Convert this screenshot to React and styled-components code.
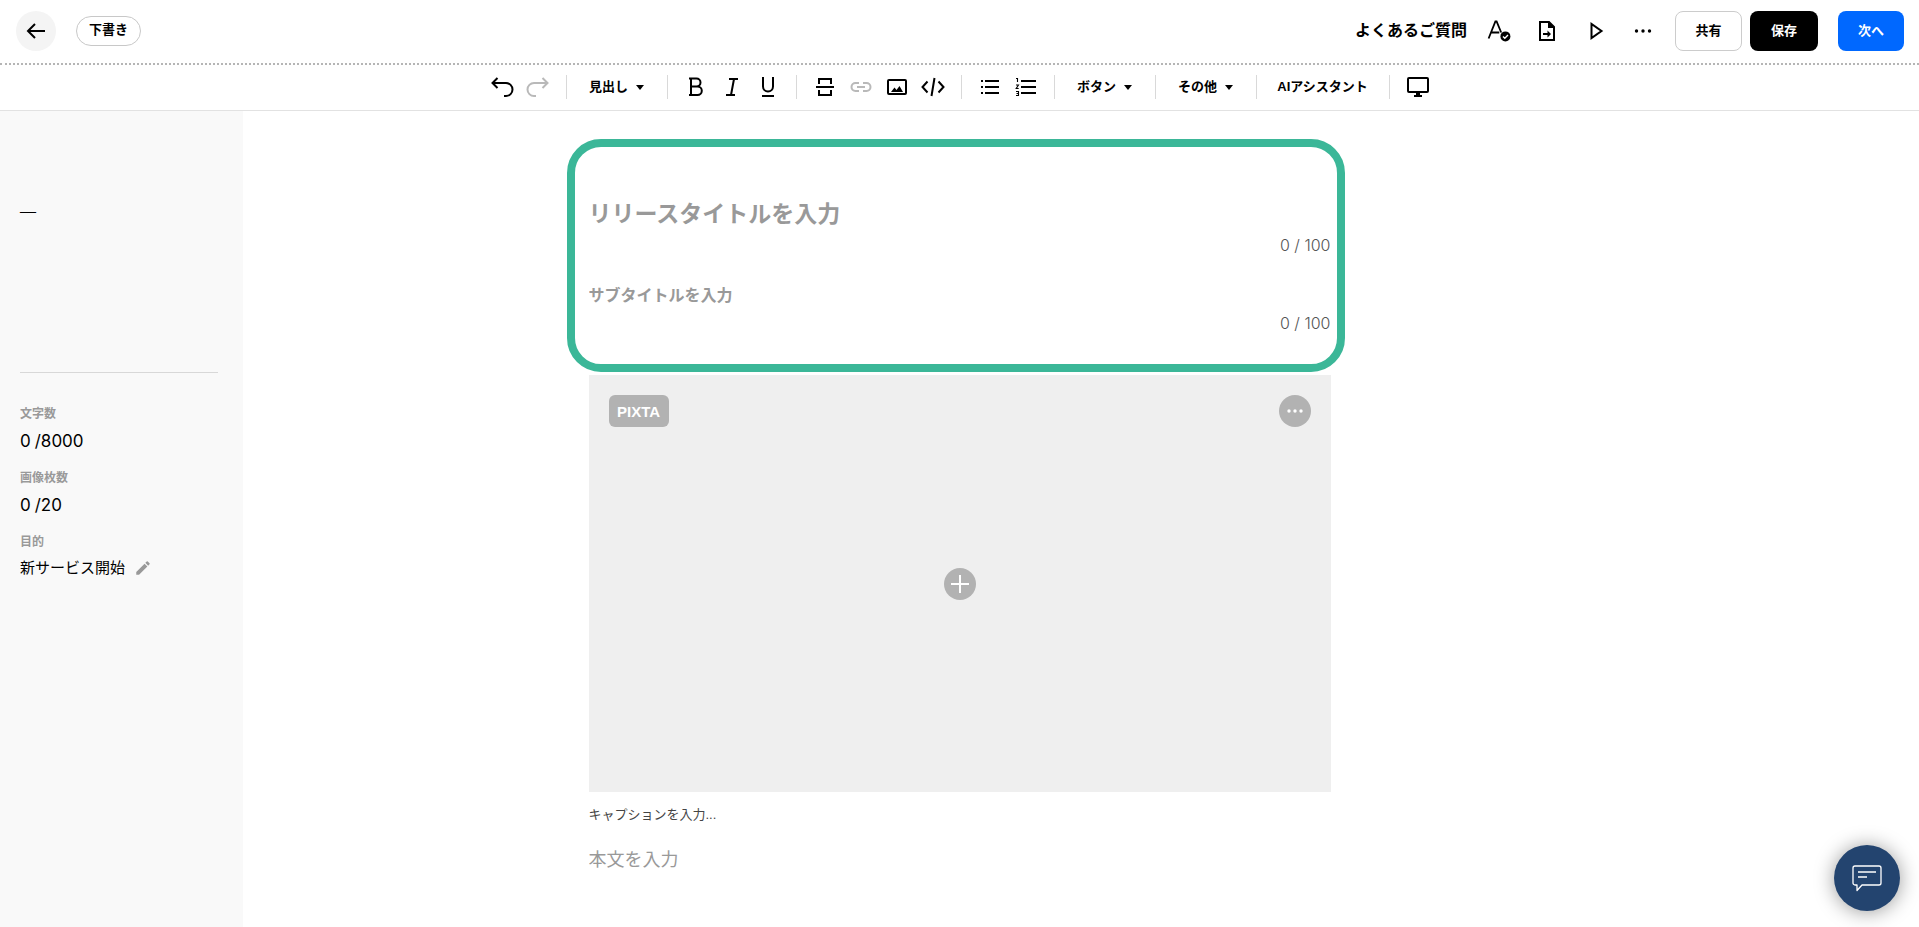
import { useState } from 'react';
import styled, { createGlobalStyle, css } from 'styled-components';

const GlobalStyle = createGlobalStyle`
  *,
  *::before,
  *::after {
    box-sizing: border-box;
  }

  body {
    margin: 0;
    color: #000;
    background: #fff;
    font-family: 'Liberation Sans', 'Noto Sans CJK JP', sans-serif;
  }

  button,
  input,
  textarea {
    font-family: inherit;
    color: inherit;
  }

  button {
    padding: 0;
    border: none;
    background: none;
    cursor: pointer;
  }
`;

const Page = styled.div`
  display: flex;
  flex-direction: column;
  min-height: 100vh;
`;

const Header = styled.header`
  display: flex;
  align-items: center;
  justify-content: space-between;
  padding: 11px 15px 12px 16px;
  border-bottom: 2px dotted #b5b5b5;
`;

const HeaderGroup = styled.div`
  display: flex;
  align-items: center;
  gap: 20px;
`;

const IconGroup = styled.div`
  display: flex;
  align-items: center;
  gap: 24px;
`;

const ButtonGroup = styled.div`
  display: flex;
  gap: 8px;
`;

const BackButton = styled.button`
  display: flex;
  align-items: center;
  justify-content: center;
  width: 40px;
  height: 40px;
  border-radius: 50%;
  background: #f4f4f4;
`;

const Status = styled.span`
  padding: 0 12px 2px;
  border: 1px solid #c8c8c8;
  border-radius: 15px;
  font-size: 13px;
  font-weight: 700;
  line-height: 26px;
`;

const FaqLink = styled.a`
  color: #000;
  font-size: 16px;
  font-weight: 700;
  line-height: 24px;
  text-decoration: none;
`;

const variants = {
  outline: css`
    min-width: 67px;
    border: 1px solid #ccc;
    background: #fff;
    color: #000;
  `,
  dark: css`
    min-width: 68px;
    background: #000;
    color: #fff;
  `,
  primary: css`
    min-width: 66px;
    background: #0068ff;
    color: #fff;
  `,
};

const Button = styled.button`
  height: 40px;
  padding-bottom: 4px;
  border-radius: 8px;
  font-size: 13px;
  font-weight: 700;
  ${({ $variant }) => variants[$variant]}
`;

const Toolbar = styled.div`
  display: flex;
  justify-content: center;
  padding: 10px 0 11px;
  border-bottom: 1px solid #e2e2e2;
`;

const Tools = styled.div`
  display: flex;
  gap: 12px;
  padding: 0 16px;

  &:first-child {
    padding-left: 0;
  }

  &:last-child {
    padding-right: 0;
  }
`;

const Divider = styled.span`
  width: 1px;
  height: 24px;
  background: #d9d9d9;
`;

const IconButton = styled.button`
  display: flex;
  width: 24px;
  height: 24px;

  &:disabled {
    color: #b9b9b9;
    cursor: default;
  }
`;

const MenuButton = styled.button`
  display: flex;
  align-items: center;
  justify-content: center;
  gap: 8px;
  width: ${({ $wide }) => ($wide ? '132px' : '100px')};
  height: 24px;
  font-size: 13px;
  font-weight: 700;
  line-height: 24px;
`;

const Body = styled.div`
  display: grid;
  flex: 1;
  grid-template-columns: 243px minmax(0, 1fr) 243px;
`;

const Sidebar = styled.aside`
  padding: 88px 25px 24px 20px;
  background: #f9f9f9;
`;

const Summary = styled.div`
  height: 174px;
  border-bottom: 1px solid #d8d8d8;
  font-family: 'Liberation Serif', serif;
  font-size: 16px;
  line-height: 24px;
`;

const Stats = styled.dl`
  display: flex;
  flex-direction: column;
  gap: 14px;
  margin: 32px 0 0;
`;

const StatLabel = styled.dt`
  margin-bottom: 4px;
  color: #999;
  font-size: 12px;
  font-weight: 700;
  line-height: 18px;
`;

const StatValue = styled.dd`
  display: flex;
  align-items: center;
  gap: 4px;
  margin: 0;
  font-family: Inter, 'Noto Sans CJK JP', sans-serif;
  font-size: 17px;
  line-height: 28px;
`;

const Purpose = styled(StatValue)`
  gap: 9px;
  font-size: 15px;
  line-height: 26px;
`;

const EditButton = styled.button`
  display: flex;
  color: #999;
`;

const Editor = styled.main`
  width: 100%;
  max-width: 742px;
  margin: 0 auto;
  padding: 28px 0 40px;
`;

const Highlight = styled.section`
  margin: 0 -14px 2px -22px;
  padding: 49px 6px 29px 14px;
  border: 8px solid #3bb798;
  border-radius: 34px;
`;

const Field = styled.input`
  display: block;
  width: 100%;
  padding: 0;
  border: none;
  outline: none;
  background: none;

  &::placeholder {
    color: #999;
    opacity: 1;
  }
`;

const TitleField = styled(Field)`
  height: 36px;
  font-size: 23px;
  font-weight: 700;
`;

const SubtitleField = styled(Field)`
  height: 28px;
  margin-top: 25px;
  font-size: 16px;
  font-weight: 700;
`;

const Counter = styled.p`
  margin: 1px 0 0;
  color: #555;
  font-family: Inter, sans-serif;
  font-size: 16px;
  font-weight: 300;
  line-height: 24px;
  text-align: right;
`;

const ImageArea = styled.div`
  display: flex;
  flex-direction: column;
  aspect-ratio: 16 / 9;
  margin-top: 3px;
  padding: 20px;
  background: #efefef;
`;

const ImageActions = styled.div`
  display: flex;
  justify-content: space-between;
`;

const StockButton = styled.button`
  width: 60px;
  height: 32px;
  border-radius: 6px;
  background: #b2b2b2;
  color: #fff;
  font-size: 15px;
  font-weight: 700;
`;

const RoundButton = styled.button`
  display: flex;
  align-items: center;
  justify-content: center;
  width: 32px;
  height: 32px;
  border-radius: 50%;
  background: #b2b2b2;
  color: #fff;
`;

const ImageDrop = styled.div`
  display: flex;
  flex: 1;
  align-items: center;
  justify-content: center;
  padding-bottom: 32px;
`;

const CaptionField = styled(Field)`
  height: 20px;
  margin-top: 12px;
  font-size: 13px;

  &::placeholder {
    color: #444;
  }
`;

const TextField = styled(Field)`
  height: 32px;
  margin-top: 20px;
  font-size: 18px;
  line-height: 32px;
  resize: none;
`;

const ChatButton = styled.button`
  position: fixed;
  right: 19px;
  bottom: 16px;
  display: flex;
  align-items: center;
  justify-content: center;
  width: 66px;
  height: 66px;
  border-radius: 50%;
  background: #23446f;
  color: #fff;
  box-shadow: 0 1px 20px rgba(0, 0, 0, 0.4);
`;

function Icon({ size = 24, children }) {
  return (
    <svg
      width={size}
      height={size}
      viewBox="0 0 24 24"
      fill="none"
      stroke="currentColor"
      strokeWidth="2"
      aria-hidden="true"
    >
      {children}
    </svg>
  );
}

const icons = {
  back: <path d="M21 12H4M11 5l-7 7 7 7" />,
  proofread: (
    <>
      <path d="M1.6 19.5 8.4 2.5h1.2l4.6 11M4.3 13.5h8" strokeWidth="1.8" />
      <circle cx="18.4" cy="17.4" r="5" fill="currentColor" stroke="none" />
      <path d="m16 17.4 1.8 1.8 3.2-3.2" stroke="#fff" strokeWidth="1.4" />
    </>
  ),
  file: (
    <>
      <path d="M5 3h9l5 5v13H5zM8 15h6" />
      <path d="M13 2v7h7zM12.5 11.5 16 15l-3.5 3.5z" fill="currentColor" stroke="none" />
    </>
  ),
  play: <path d="M8.5 5v14l10-7z" />,
  more: (
    <g fill="currentColor" stroke="none">
      <circle cx="5.5" cy="12" r="1.7" />
      <circle cx="12" cy="12" r="1.7" />
      <circle cx="18.5" cy="12" r="1.7" />
    </g>
  ),
  undo: <path d="M7.5 3 2.5 8l5 5M2.5 8H16a6 6 0 0 1 0 13h-2" />,
  redo: <path d="m16.5 3 5 5-5 5M21.5 8H8a6 6 0 0 0 0 13h2" />,
  bold: <path d="M7 3.5h5.5a4 4 0 0 1 0 8H7zM7 11.5h6.5a4.3 4.3 0 0 1 0 8.6H7zM5 3.5h3M5 20.1h3" />,
  italic: <path d="M9 4h9M6 20h9M14 4l-3 16" />,
  underline: <path d="M7 2v9.5a5 5 0 0 0 10 0V2M6 21h12" />,
  rule: <path d="M6 9V4h12v5M3 12h18M6 15v5h12v-5" />,
  link: <path d="M10 8H6.5a4 4 0 0 0 0 8H10M14 8h3.5a4 4 0 0 1 0 8H14M8 12h8" />,
  image: (
    <>
      <rect x="3" y="5" width="18" height="14" rx="1" />
      <path d="m6 17 3.5-4.5 2 2.5 3-4L18 17z" fill="currentColor" stroke="none" />
    </>
  ),
  code: <path d="M6.5 6.5 1.5 12l5 5.5M17.5 6.5l5 5.5-5 5.5M13.5 3l-3 18" />,
  bullets: <path d="M7 6h14M7 12h14M7 18h14M3 6h2M3 12h2M3 18h2" />,
  numbers: (
    <>
      <path d="M7 6h15M7 12h15M7 18h15" />
      <path
        d="M2 3.5h1.5V7M2 10h2.5l-2.3 3.5h2.500M2 16.500h2.500v4H2M2.500 18.500h2"
        strokeWidth="1.1"
      />
    </>
  ),
  monitor: (
    <>
      <rect x="2" y="3" width="20" height="14" rx="1" />
      <path d="M12 17v4M8 21h8" />
      <path d="M10 17h4v3h-4z" fill="currentColor" stroke="none" />
    </>
  ),
  pencil: (
    <path
      d="M3 17.25V21h3.75L17.81 9.94l-3.75-3.75zM20.71 7.04a1 1 0 0 0 0-1.41l-2.34-2.34a1 1 0 0 0-1.41 0l-1.83 1.83 3.75 3.75z"
      fill="currentColor"
      stroke="none"
    />
  ),
};

function Tool({ name, label, disabled }) {
  return (
    <IconButton type="button" aria-label={label} disabled={disabled}>
      <Icon>{icons[name]}</Icon>
    </IconButton>
  );
}

function Menu({ label }) {
  return (
    <MenuButton type="button" aria-haspopup="menu">
      {label}
      <svg width="8" height="5" viewBox="0 0 8 5" aria-hidden="true">
        <path d="M0 0h8L4 5z" fill="currentColor" />
      </svg>
    </MenuButton>
  );
}

function App() {
  const [title, setTitle] = useState('');
  const [subtitle, setSubtitle] = useState('');
  const [text, setText] = useState('');

  return (
    <>
      <GlobalStyle />
      <Page>
        <Header>
          <HeaderGroup>
            <BackButton type="button" aria-label="戻る">
              <Icon>{icons.back}</Icon>
            </BackButton>
            <Status>下書き</Status>
          </HeaderGroup>
          <HeaderGroup>
            <FaqLink href="#faq">よくあるご質問</FaqLink>
            <IconGroup>
              <Tool name="proofread" label="校正" />
              <Tool name="file" label="ファイル" />
              <Tool name="play" label="プレビュー" />
              <Tool name="more" label="メニュー" />
            </IconGroup>
            <ButtonGroup>
              <Button type="button" $variant="outline">
                共有
              </Button>
              <Button type="button" $variant="dark">
                保存
              </Button>
            </ButtonGroup>
            <Button type="button" $variant="primary">
              次へ
            </Button>
          </HeaderGroup>
        </Header>

        <Toolbar role="toolbar">
          <Tools>
            <Tool name="undo" label="元に戻す" />
            <Tool name="redo" label="やり直す" disabled />
          </Tools>
          <Divider />
          <Menu label="見出し" />
          <Divider />
          <Tools>
            <Tool name="bold" label="太字" />
            <Tool name="italic" label="斜体" />
            <Tool name="underline" label="下線" />
          </Tools>
          <Divider />
          <Tools>
            <Tool name="rule" label="区切り線" />
            <Tool name="link" label="リンク" disabled />
            <Tool name="image" label="画像" />
            <Tool name="code" label="埋め込み" />
          </Tools>
          <Divider />
          <Tools>
            <Tool name="bullets" label="箇条書き" />
            <Tool name="numbers" label="番号付きリスト" />
          </Tools>
          <Divider />
          <Menu label="ボタン" />
          <Divider />
          <Menu label="その他" />
          <Divider />
          <MenuButton type="button" $wide>
            AIアシスタント
          </MenuButton>
          <Divider />
          <Tools>
            <Tool name="monitor" label="表示切り替え" />
          </Tools>
        </Toolbar>

        <Body>
          <Sidebar>
            <Summary>—</Summary>
            <Stats>
              <div>
                <StatLabel>文字数</StatLabel>
                <StatValue>
                  <span>{text.length}</span>
                  <span>/8000</span>
                </StatValue>
              </div>
              <div>
                <StatLabel>画像枚数</StatLabel>
                <StatValue>
                  <span>0</span>
                  <span>/20</span>
                </StatValue>
              </div>
              <div>
                <StatLabel>目的</StatLabel>
                <Purpose>
                  新サービス開始
                  <EditButton type="button" aria-label="目的を編集">
                    <Icon size={18}>{icons.pencil}</Icon>
                  </EditButton>
                </Purpose>
              </div>
            </Stats>
          </Sidebar>

          <Editor>
            <Highlight>
              <TitleField
                aria-label="リリースタイトル"
                placeholder="リリースタイトルを入力"
                maxLength={100}
                value={title}
                onChange={(e) => setTitle(e.target.value)}
              />
              <Counter>{`${title.length} / 100`}</Counter>
              <SubtitleField
                aria-label="サブタイトル"
                placeholder="サブタイトルを入力"
                maxLength={100}
                value={subtitle}
                onChange={(e) => setSubtitle(e.target.value)}
              />
              <Counter>{`${subtitle.length} / 100`}</Counter>
            </Highlight>

            <ImageArea>
              <ImageActions>
                <StockButton type="button">PIXTA</StockButton>
                <RoundButton type="button" aria-label="画像メニュー">
                  <svg width="16" height="4" viewBox="0 0 16 4" fill="currentColor">
                    <circle cx="2" cy="2" r="1.7" />
                    <circle cx="8" cy="2" r="1.7" />
                    <circle cx="14" cy="2" r="1.7" />
                  </svg>
                </RoundButton>
              </ImageActions>
              <ImageDrop>
                <RoundButton type="button" aria-label="画像を追加">
                  <svg width="18" height="18" viewBox="0 0 18 18" stroke="currentColor">
                    <path d="M9 0v18M0 9h18" strokeWidth="2" />
                  </svg>
                </RoundButton>
              </ImageDrop>
            </ImageArea>
            <CaptionField aria-label="キャプション" placeholder="キャプションを入力..." />
            <TextField
              as="textarea"
              aria-label="本文"
              placeholder="本文を入力"
              value={text}
              onChange={(e) => setText(e.target.value)}
            />
          </Editor>
        </Body>
      </Page>

      <ChatButton type="button" aria-label="チャット">
        <svg width="30" height="27" viewBox="0 0 30 27" fill="none" stroke="currentColor" strokeWidth="1.3">
          <path
            d="M3 1h24a2 2 0 0 1 2 2v15a2 2 0 0 1-2 2H10l-5 5.5V20H3a2 2 0 0 1-2-2V3a2 2 0 0 1 2-2z"
            strokeLinejoin="round"
          />
          <path d="M6 7h18M6 12h9" />
        </svg>
      </ChatButton>
    </>
  );
}

export default App;
